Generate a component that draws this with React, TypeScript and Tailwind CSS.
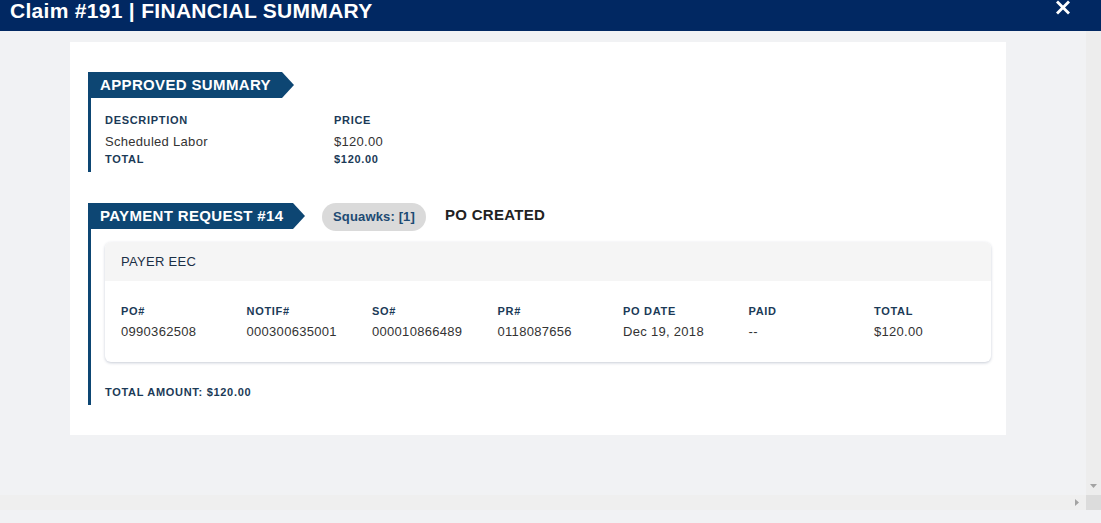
import React from "react";

function Ribbon({ label, width }: { label: string; width: number }) {
  return (
    <div className="flex h-[26px]">
      <div
        className="flex h-[26px] items-center bg-[#0d4673] pb-[2px] pl-[12px] text-[15px] font-bold leading-none tracking-[0.35px] text-white"
        style={{ width }}
      >
        {label}
      </div>
      <svg width="13" height="26" viewBox="0 0 13 26" className="block">
        <polygon points="0,0 1,0 13,13 1,26 0,26" fill="#0d4673" />
      </svg>
    </div>
  );
}

const cols = [
  ["PO#", "0990362508"],
  ["NOTIF#", "000300635001"],
  ["SO#", "000010866489"],
  ["PR#", "0118087656"],
  ["PO DATE", "Dec 19, 2018"],
  ["PAID", "--"],
  ["TOTAL", "$120.00"],
];

export default function App() {
  return (
    <div
      className="flex h-[523px] w-[1101px] flex-col overflow-hidden bg-[#f1f2f4]"
      style={{ fontFamily: '"Liberation Sans", Arial, sans-serif' }}
    >
      {/* Header */}
      <div className="flex h-[31px] shrink-0 items-start justify-between bg-[#012862] pl-[10px] pr-[30px]">
        <div className="text-[21px] font-bold leading-[21px] tracking-[0.3px] text-white">
          Claim #191 | FINANCIAL SUMMARY
        </div>
        <svg width="16" height="16" viewBox="0 0 16 16">
          <path d="M3 2 L8 7 L13 2 L15 4 L10 9 L15 14 L13 16 L8 11 L3 16 L1 14 L6 9 L1 4 Z" fill="#fff" transform="translate(0,-1.5)" />
        </svg>
      </div>

      {/* Scroll area */}
      <div className="flex h-[464px] shrink-0">
        <div className="flex-1 overflow-hidden pl-[70px] pt-[11px]">
          <div className="w-[936px] bg-white pb-[30px] pl-[18px] pr-[15px] pt-[30px]">
            {/* Approved summary */}
            <Ribbon label="APPROVED SUMMARY" width={193} />
            <div className="border-l-[3px] border-[#0d4673] pb-[5px] pl-[14px] pt-[14px]">
              <div className="flex text-[11px] font-bold leading-[16px] tracking-[0.7px] text-[#1b3a57]">
                <div className="w-[229px]">DESCRIPTION</div>
                <div>PRICE</div>
              </div>
              <div className="mt-[5px] flex text-[13px] leading-[17px] tracking-[0.3px] text-[#333]">
                <div className="w-[229px]">Scheduled Labor</div>
                <div>$120.00</div>
              </div>
              <div className="mt-[1px] flex text-[11px] font-bold leading-[16px] tracking-[0.7px] text-[#1b3a57]">
                <div className="w-[229px]">TOTAL</div>
                <div>$120.00</div>
              </div>
            </div>

            {/* Payment request */}
            <div className="mt-[31px] flex h-[26px] items-start">
              <Ribbon label="PAYMENT REQUEST #14" width={204} />
              <div className="ml-[17px] flex h-[28px] shrink-0 items-center rounded-full bg-[#dadada] px-[11px] text-[13px] font-bold tracking-[0.15px] text-[#1d4a73]">
                Squawks: [1]
              </div>
              <div className="ml-[19px] flex h-[25px] items-center text-[15px] font-bold tracking-[0.3px] text-[#222]">
                PO CREATED
              </div>
            </div>
            <div className="border-l-[3px] border-[#0d4673] pb-[5px] pl-[14px] pt-[13px]">
              <div className="overflow-hidden rounded-[6px] bg-white shadow-[0_1px_3px_rgba(30,50,90,0.25)]">
                <div className="flex h-[39px] items-center bg-[#f5f5f5] px-[16px] text-[13px] tracking-[0.3px] text-[#1b2f45]">
                  PAYER EEC
                </div>
                <div className="grid grid-cols-[repeat(7,125.5px)] px-[16px] pb-[22px] pt-[22px]">
                  {cols.map(([h, v]) => (
                    <div key={h}>
                      <div className="text-[11px] font-bold leading-[16px] tracking-[0.7px] text-[#1b3a57]">{h}</div>
                      <div className="mt-[5px] text-[13px] leading-[16px] tracking-[0.3px] text-[#333]">{v}</div>
                    </div>
                  ))}
                </div>
              </div>
              <div className="mt-[22px] text-[11px] font-bold leading-[16px] tracking-[0.7px] text-[#1b3a57]">
                TOTAL AMOUNT: $120.00
              </div>
            </div>
          </div>
        </div>
        {/* vertical scrollbar */}
        <div className="flex w-[15px] shrink-0 flex-col justify-end bg-[#ededed] pb-[5px]">
          <svg width="15" height="8" viewBox="0 0 15 8">
            <polygon points="4,2 11,2 7.5,6" fill="#a3a3a3" />
          </svg>
        </div>
      </div>

      {/* horizontal scrollbar */}
      <div className="flex h-[15px] shrink-0">
        <div className="flex flex-1 items-center justify-end bg-[#efefef] pr-[5px]">
          <svg width="8" height="15" viewBox="0 0 8 15">
            <polygon points="2,4 2,11 6,7.5" fill="#a3a3a3" />
          </svg>
        </div>
        <div className="w-[15px] bg-[#dcdcdc]" />
      </div>
      <div className="h-[13px]" />
    </div>
  );
}
